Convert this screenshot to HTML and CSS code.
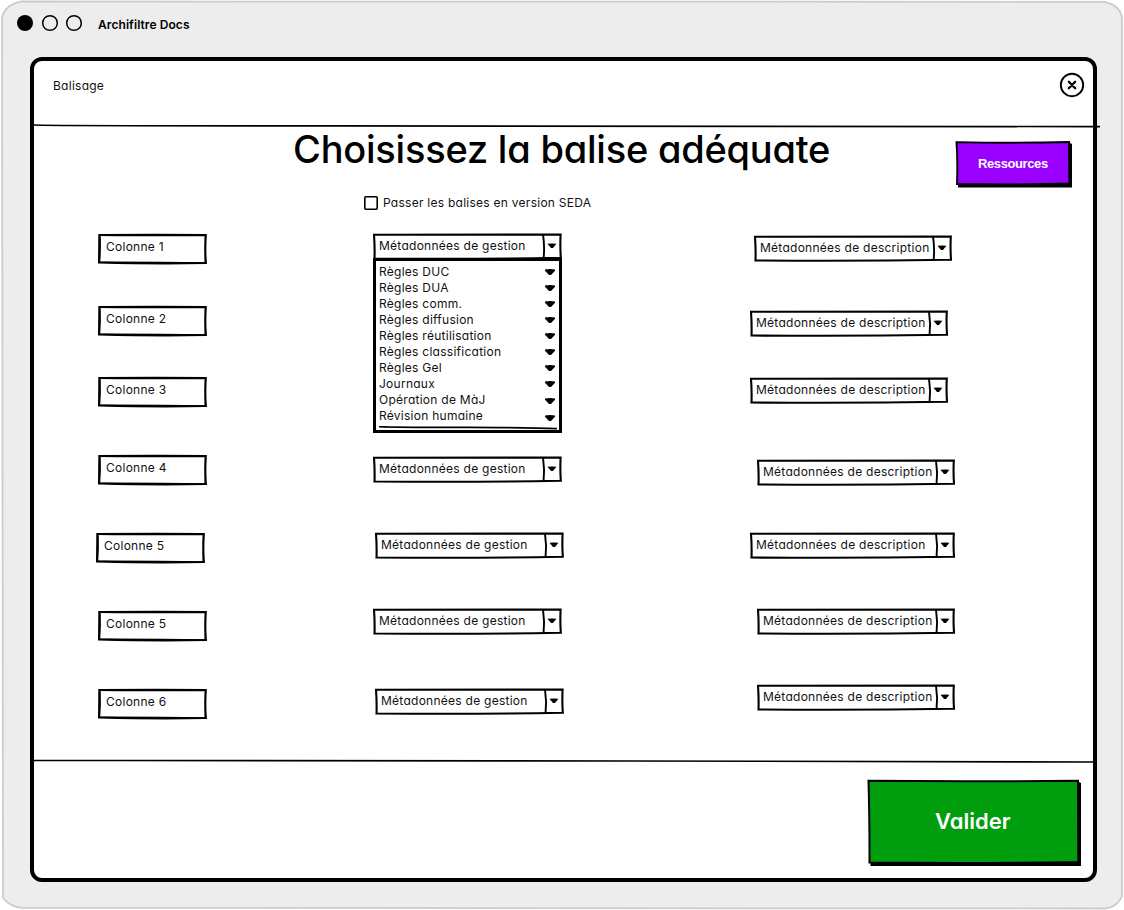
FILE: index.html
```html
<!DOCTYPE html>
<html lang="fr">
<head>
<meta charset="utf-8">
<title>Archifiltre Docs</title>
<link rel="stylesheet" href="styles.css">
</head>
<body>
<svg class="defs" aria-hidden="true">
  <symbol id="field" viewBox="0 0 110 32">
    <path d="M1.300 2 Q50 1.500 107.800 1.900 Q106.800 15 107.900 30 Q60 31 1 29.500 Q1.200 14 1.300 2 Z" fill="#fff" stroke="#000" stroke-width="2"/>
    <path d="M1 2.400 Q40 3 107.800 2.200 M2 2.200 Q2.600 16 1.500 29.500 M1 29.300 Q60 29.200 108.500 30 M107.500 2 L107.200 30" fill="none" stroke="#000" stroke-width="1.400"/>
  </symbol>
  <symbol id="combo" viewBox="0 0 190 28">
    <path d="M1 1.800 Q80 1.300 187.600 1.500 Q187 13 187.800 24.800 Q100 26.300 1.500 25.500 Q1.900 14 1 1.800 Z" fill="#fff" stroke="#000" stroke-width="2.100"/>
    <path d="M170 1.500 Q171.900 14 170.500 26" fill="none" stroke="#000" stroke-width="1.900"/>
    <path d="M174.500 10.700 Q179 10.100 183.400 10.700 L180 15 H178 Z"/>
  </symbol>
  <symbol id="combo-m" viewBox="0 0 199 28">
    <path d="M1 1.800 Q80 1.300 196.800 1.500 Q196.200 13 197 24.800 Q100 26.300 1.500 25.500 Q1.900 14 1 1.800 Z" fill="#fff" stroke="#000" stroke-width="2.100"/>
    <path d="M179 1.500 Q180.900 14 179.500 26" fill="none" stroke="#000" stroke-width="1.900"/>
    <path d="M183.500 10.700 Q188 10.100 192.400 10.700 L189 15 H187 Z"/>
  </symbol>
  <symbol id="combo-l" viewBox="0 0 206 28">
    <path d="M1 1.800 Q80 1.300 203.800 1.500 Q203.200 13 204 24.800 Q100 26.300 1.500 25.500 Q1.900 14 1 1.800 Z" fill="#fff" stroke="#000" stroke-width="2.100"/>
    <path d="M186 1.500 Q187.900 14 186.500 26" fill="none" stroke="#000" stroke-width="1.900"/>
    <path d="M190.500 10.700 Q195 10.100 199.400 10.700 L196 15 H194 Z"/>
  </symbol>
  <symbol id="arrow" viewBox="0 0 12 8">
    <path d="M1 1.400 Q6 .5 11 1.400 V2.800 L7.500 6.500 Q6 7.700 4.500 6.500 L1 2.800 Z"/>
  </symbol>
</svg>

<div class="window">
  <svg class="frame" viewBox="0 0 1124 910" aria-hidden="true">
    <path d="M22 1.500 Q500 2.600 1104 1.800 Q1121 5 1122 19 Q1120.500 450 1122 896 Q1117 908 1104 908.500 Q600 909.500 22 907.800 Q10 907 3 898 Q3.500 450 2 17 Q6 4 22 1.500 Z" fill="#ededed" stroke="#ccc" stroke-width="1.800"/>
  </svg>
  <header class="titlebar">
    <svg class="dots" viewBox="0 0 66 18" aria-hidden="true">
      <circle cx="9" cy="9" r="8"/>
      <circle cx="34" cy="9" r="7.300" fill="none" stroke="#000" stroke-width="1.500"/>
      <circle cx="58" cy="9" r="7.300" fill="none" stroke="#000" stroke-width="1.500"/>
    </svg>
    <span class="app-name">Archifiltre Docs</span>
  </header>

  <main class="panel">
    <div class="panel-head">
      <span class="section">Balisage</span>
      <svg class="close" viewBox="0 0 26 26" aria-hidden="true">
        <circle cx="13" cy="13" r="11.200" fill="none" stroke="#000" stroke-width="1.900"/>
        <path d="M9.800 9.800 L16.200 16.200 M16.200 9.800 L9.800 16.200" stroke="#000" stroke-width="2.300" stroke-linecap="round"/>
      </svg>
    </div>
    <svg class="rule" viewBox="0 0 1066 4" aria-hidden="true"><path d="M0 1 Q20 1.800 300 1.900 T1066 2.600" fill="none" stroke="#000" stroke-width="1.700"/></svg>

    <div class="intro">
      <div class="intro-main">
        <h1>Choisissez la balise adéquate</h1>
        <div class="check">
          <svg viewBox="0 0 16 16" aria-hidden="true"><rect x="1.800" y="1.800" width="12.400" height="12.400" rx="1" fill="#fff" stroke="#000" stroke-width="1.600"/></svg>
          <span>Passer les balises en version SEDA</span>
        </div>
      </div>
      <div class="sketch resources">
        <svg viewBox="0 0 118 48" aria-hidden="true">
          <path d="M3 5 L115 3 L117 4 V47.500 H3 Z"/>
          <path d="M1.500 2.100 Q60 3.300 114 2 L114.300 43.500 Q60 45 2 44 Q2.800 20 1.500 2.100 Z" fill="#90f" stroke="#000" stroke-width="1.900"/>
        </svg>
        <span>Ressources</span>
      </div>
    </div>

    <div class="columns">
      <div class="col col-names">
        <div class="sketch field"><svg><use href="#field"/></svg><span>Colonne 1</span></div>
        <div class="sketch field f2"><svg><use href="#field"/></svg><span>Colonne 2</span></div>
        <div class="sketch field f3"><svg><use href="#field"/></svg><span>Colonne 3</span></div>
        <div class="sketch field f4"><svg><use href="#field"/></svg><span>Colonne 4</span></div>
        <div class="sketch field f5"><svg><use href="#field"/></svg><span>Colonne 5</span></div>
        <div class="sketch field f6"><svg><use href="#field"/></svg><span>Colonne 5</span></div>
        <div class="sketch field f7"><svg><use href="#field"/></svg><span>Colonne 6</span></div>
      </div>

      <div class="col col-gestion">
        <div class="sketch combo"><svg><use href="#combo"/></svg><span>Métadonnées de gestion</span></div>
        <div class="menu">
          <div class="item"><span>Règles DUC</span><svg><use href="#arrow"/></svg></div>
          <div class="item"><span>Règles DUA</span><svg><use href="#arrow"/></svg></div>
          <div class="item"><span>Règles comm.</span><svg><use href="#arrow"/></svg></div>
          <div class="item"><span>Règles diffusion</span><svg><use href="#arrow"/></svg></div>
          <div class="item"><span>Règles réutilisation</span><svg><use href="#arrow"/></svg></div>
          <div class="item"><span>Règles classification</span><svg><use href="#arrow"/></svg></div>
          <div class="item"><span>Règles Gel</span><svg><use href="#arrow"/></svg></div>
          <div class="item"><span>Journaux</span><svg><use href="#arrow"/></svg></div>
          <div class="item low"><span>Opération de MàJ</span><svg><use href="#arrow"/></svg></div>
          <div class="item lower"><span>Révision humaine</span><svg><use href="#arrow"/></svg></div>
          <svg class="menu-line" viewBox="0 0 182 4" aria-hidden="true"><path d="M0 .6 Q20 1.500 90 1.400 Q150 1.500 178 2.600" fill="none" stroke="#000" stroke-width="1.600"/></svg>
        </div>
        <div class="sketch combo g2"><svg><use href="#combo"/></svg><span>Métadonnées de gestion</span></div>
        <div class="sketch combo g3"><svg><use href="#combo"/></svg><span>Métadonnées de gestion</span></div>
        <div class="sketch combo g4"><svg><use href="#combo"/></svg><span>Métadonnées de gestion</span></div>
        <div class="sketch combo g5"><svg><use href="#combo"/></svg><span>Métadonnées de gestion</span></div>
      </div>

      <div class="col col-description">
        <div class="sketch combo medium d1"><svg><use href="#combo-m"/></svg><span>Métadonnées de description</span></div>
        <div class="sketch combo medium d2"><svg><use href="#combo-m"/></svg><span>Métadonnées de description</span></div>
        <div class="sketch combo medium d3"><svg><use href="#combo-m"/></svg><span>Métadonnées de description</span></div>
        <div class="sketch combo medium d4"><svg><use href="#combo-m"/></svg><span>Métadonnées de description</span></div>
        <div class="sketch combo large d5"><svg><use href="#combo-l"/></svg><span>Métadonnées de description</span></div>
        <div class="sketch combo medium d6"><svg><use href="#combo-m"/></svg><span>Métadonnées de description</span></div>
        <div class="sketch combo medium d7"><svg><use href="#combo-m"/></svg><span>Métadonnées de description</span></div>
      </div>
    </div>

    <svg class="rule rule-bottom" viewBox="0 0 1059 4" aria-hidden="true"><path d="M0 1.500 Q300 1.400 600 2 T1059 3" fill="none" stroke="#000" stroke-width="1.600"/></svg>
    <footer class="actions">
      <div class="sketch validate">
        <svg viewBox="0 0 215 88" aria-hidden="true">
          <path d="M3.500 5 L212 3 L214 4 V87 H3.500 Z"/>
          <path d="M1.500 1.800 Q100 2.800 211 1.700 L211.300 83 Q110 84.500 2.500 83.500 Q2.600 40 1.500 1.800 Z" fill="#009e0f" stroke="#000" stroke-width="2"/>
        </svg>
        <span>Valider</span>
      </div>
    </footer>
  </main>
</div>
</body>
</html>
```
FILE: styles.css
```css
* { box-sizing: border-box; }

body {
  margin: 0;
  background: #fff;
  color: #111;
  font: 12px/16px Inter, "Open Sans", sans-serif;
  font-feature-settings: "cv11" 1, "ss03" 1;
  letter-spacing: .26px;
}

.defs { display: block; width: 0; height: 0; }
svg { display: block; flex: none; }

.window {
  display: grid;
  grid-template: 57px 825px 28px / 1fr;
  width: 1124px;
  height: 910px;
}
.frame { grid-area: 1 / 1 / 4 / 2; width: 1124px; height: 910px; }

.titlebar {
  grid-area: 1 / 1;
  display: flex;
  align-items: flex-start;
  gap: 16px;
  padding: 14px 0 0 16px;
}
.dots { width: 66px; height: 18px; }
.app-name {
  padding-top: 2px;
  color: #000;
  font-weight: 600;
  line-height: 17px;
  letter-spacing: .08px;
  white-space: nowrap;
}

.panel {
  grid-area: 2 / 1;
  display: flex;
  flex-direction: column;
  width: 1067px;
  margin-left: 30px;
  border: 4px solid #000;
  border-radius: 12px;
  background: #fff;
}

.panel-head {
  display: flex;
  justify-content: space-between;
  height: 63px;
  padding: 11px 8px 0 19px;
}
.section { padding-top: 6px; }
.close { width: 26px; height: 26px; }

.rule { width: 1066px; height: 4px; }
.rule-bottom { width: 1059px; }

.intro { display: flex; height: 105px; }
.intro-main { width: 921px; padding-left: 259px; }
h1 {
  margin: 0;
  color: #000;
  font-size: 38px;
  font-weight: 500;
  line-height: 42px;
  letter-spacing: -.22px;
  white-space: nowrap;
}
.check { display: flex; gap: 4px; margin: 25px 0 0 70px; white-space: nowrap; }
.check svg { width: 16px; height: 16px; }

/* Hand-drawn shape with its label stacked in the same grid cell */
.sketch { display: grid; white-space: nowrap; }
.sketch > * { grid-area: 1 / 1; }
.sketch > svg { width: 100%; height: 100%; }

.resources {
  width: 118px;
  height: 48px;
  margin-top: 12px;
  color: #fff;
  font: 700 13px/16px "Liberation Sans", Arial, sans-serif;
  letter-spacing: -.4px;
}
.resources span { padding: 16px 0 0 23px; }

.columns { display: flex; height: 526px; }
.col { display: flex; flex-direction: column; align-items: flex-start; }
.col-names { width: 339px; padding: 0 0 0 62px; }
.col-gestion { width: 377px; }
.col-description { width: 209px; }

.field { flex: none; width: 110px; height: 32px; margin-left: 2px; }
.field span { padding: 6px 0 0 8px; }
.f2 { margin-top: 40px; }
.f3 { margin-top: 39px; }
.f4, .f5, .f6, .f7 { margin-top: 46px; }
.f5 { margin-left: 0; }

.combo { flex: none; width: 190px; height: 28px; }
.combo span { padding: 5px 0 0 6px; }
.medium { width: 199px; }
.large { width: 206px; }

.menu {
  width: 189px;
  height: 175px;
  margin-top: -3px;
  padding: 3px 0 0 3px;
  border: 3px solid #000;
  background: #fff;
}
.item { display: flex; justify-content: space-between; height: 16px; padding-right: 3px; white-space: nowrap; }
.item svg { width: 12px; height: 8px; margin-top: 4px; }
.low svg { margin-top: 5px; }
.lower svg { margin-top: 6px; }
.menu-line { width: 182px; height: 4px; margin-top: 2px; }

.g2 { margin-top: 23px; }
.g3 { margin: 48px 0 0 2px; }
.g4 { margin-top: 48px; }
.g5 { margin: 52px 0 0 2px; }

.d1 { margin: 2px 0 0 4px; }
.d2 { margin-top: 47px; }
.d3 { margin-top: 39px; }
.d4 { margin: 54px 0 0 7px; }
.d5 { margin-top: 45px; }
.d6 { margin: 48px 0 0 7px; }
.d7 { margin: 48px 0 0 7px; }

.actions { display: flex; justify-content: flex-end; padding: 16px 11px 0 0; }
.validate { width: 215px; height: 88px; color: #fff; }
.validate span {
  padding: 28px 0 0 68px;
  font-size: 22px;
  font-weight: 600;
  line-height: 28px;
  letter-spacing: 0;
}
```
